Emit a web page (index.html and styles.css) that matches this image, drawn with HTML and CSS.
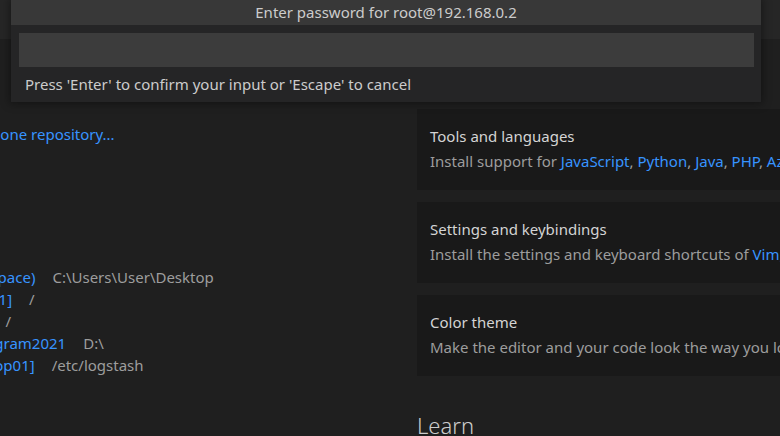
FILE: index.html
```html
<!DOCTYPE html>
<html lang="en">
<head>
<meta charset="utf-8">
<title>Welcome</title>
<link rel="stylesheet" href="styles.css">
</head>
<body>
<div class="tabbar"></div>
<main class="welcome">
  <section class="col col-left">
    <ul class="start-list">
      <li><a class="link">Clone repository...</a></li>
    </ul>
    <ul class="recent-list">
      <li><a class="link">(Workspace)</a><span class="path">C:\Users\User\Desktop</span></li>
      <li><a class="link">[node01]</a><span class="path">/</span></li>
      <li><a class="link">nginx</a><span class="path">/</span></li>
      <li><a class="link">MyProgram2021</a><span class="path">D:\</span></li>
      <li><a class="link">[Madoop01]</a><span class="path">/etc/logstash</span></li>
    </ul>
  </section>
  <section class="col col-right">
    <div class="card">
      <div class="card-title">Tools and languages</div>
      <div class="card-desc">Install support for <a class="link">JavaScript</a>, <a class="link">Python</a>, <a class="link">Java</a>, <a class="link">PHP</a>, <a class="link">Azure</a>, <a class="link">Docker</a> and more</div>
    </div>
    <div class="card">
      <div class="card-title">Settings and keybindings</div>
      <div class="card-desc">Install the settings and keyboard shortcuts of <a class="link">Vim</a>, <a class="link">Sublime</a>, <a class="link">Atom</a> and others</div>
    </div>
    <div class="card">
      <div class="card-title">Color theme</div>
      <div class="card-desc">Make the editor and your code look the way you love</div>
    </div>
    <h2 class="section-title">Learn</h2>
  </section>
</main>
<div class="quick-input">
  <div class="qi-title">Enter password for root@192.168.0.2</div>
  <div class="qi-body">
    <div class="qi-input"></div>
    <div class="qi-message">Press 'Enter' to confirm your input or 'Escape' to cancel</div>
  </div>
</div>
</body>
</html>
```

FILE: styles.css
```css
* { box-sizing: border-box; }
html, body {
  margin: 0;
  padding: 0;
  width: 780px;
  height: 436px;
  overflow: hidden;
  background: #1f1f1f;
  font-family: "Noto Sans", "Open Sans", sans-serif;
  font-size: 15px;
  color: #cccccc;
}
.tabbar {
  height: 39px;
  background: #262626;
}
.welcome {
  display: grid;
  grid-template-columns: 444px 420px;
  column-gap: 24px;
  margin-left: -51px;
}
ul { list-style: none; margin: 0; padding: 0; }
.link { color: #3794ff; text-decoration: none; }
.start-list {
  padding-top: 84px;
  padding-left: 38px;
}
.start-list li { line-height: 22px; }
.recent-list {
  margin-top: 121px;
}
.recent-list li {
  line-height: 22px;
  white-space: nowrap;
  display: flex;
  gap: 17px;
}
.path { color: #9d9d9d; }
.col-right {
  padding-top: 70px;
  display: flex;
  flex-direction: column;
  gap: 12px;
}
.card {
  background: #191919;
  height: 81px;
  padding: 16px 13px;
  white-space: nowrap;
}
.card-title {
  font-size: 15px;
  line-height: 22px;
  color: #d4d4d4;
}
.card-desc {
  margin-top: 3px;
  line-height: 22px;
  color: #9d9d9d;
}
.section-title {
  margin: 22px 0 0;
  font-size: 22px;
  font-weight: 300;
  line-height: 30px;
  color: #cccccc;
}
.quick-input {
  position: absolute;
  top: 0;
  left: 11px;
  width: 750px;
  background: #252526;
  box-shadow: 0 0 8px 2px rgba(0, 0, 0, 0.36);
}
.qi-title {
  height: 25px;
  line-height: 24px;
  text-align: center;
  background: #383838;
  color: #cccccc;
}
.qi-body {
  padding: 8px 7px 7px 8px;
}
.qi-input {
  height: 34px;
  background: #3c3c3c;
}
.qi-message {
  padding: 7px 6px 0;
  line-height: 21px;
  color: #cccccc;
}
```
